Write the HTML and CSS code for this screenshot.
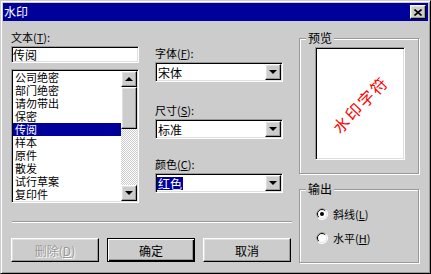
FILE: index.html
```html
<!DOCTYPE html>
<html lang="zh-CN">
<head>
    <meta charset="UTF-8">
    <title>水印</title>
    <link rel="stylesheet" href="styles.css">
</head>
<body>
    <div class="window">
        <div class="titlebar">
            <span class="title">水印</span>
            <button class="close">
                <svg width="8" height="7" viewBox="0 0 8 7">
                    <path d="M0.5 0.5 L7.5 6.5 M7.5 0.5 L0.5 6.5" stroke="#000" stroke-width="1.6" fill="none"/>
                </svg>
            </button>
        </div>
        <div class="dialog-body">
            <div class="main">
                <div class="fields">
                    <div class="col">
                        <label class="lbl">文本(<u>T</u>):</label>
                        <div class="textbox">传阅</div>
                        <div class="listbox">
                            <ul class="items">
                                <li>公司绝密</li>
                                <li>部门绝密</li>
                                <li>请勿带出</li>
                                <li>保密</li>
                                <li class="selected">传阅</li>
                                <li>样本</li>
                                <li>原件</li>
                                <li>散发</li>
                                <li>试行草案</li>
                                <li>复印件</li>
                            </ul>
                            <div class="vscroll">
                                <div class="sbtn up"></div>
                                <div class="thumb"></div>
                                <div class="track"></div>
                                <div class="sbtn down"></div>
                            </div>
                        </div>
                    </div>
                    <div class="col">
                        <label class="lbl lbl-font">字体(<u>F</u>):</label>
                        <div class="combo"><span class="value">宋体</span><span class="drop"></span></div>
                        <label class="lbl lbl-size">尺寸(<u>S</u>):</label>
                        <div class="combo"><span class="value">标准</span><span class="drop"></span></div>
                        <label class="lbl lbl-color">颜色(<u>C</u>):</label>
                        <div class="combo"><span class="value active">红色</span><span class="drop"></span></div>
                    </div>
                </div>
                <div class="separator"></div>
                <div class="buttons">
                    <button class="btn" disabled>删除(<u>D</u>)</button>
                    <button class="btn default">确定</button>
                    <button class="btn">取消</button>
                </div>
            </div>
            <div class="side">
                <fieldset class="group">
                    <legend>预览</legend>
                    <div class="preview"><span class="mark">水印字符</span></div>
                </fieldset>
                <fieldset class="group output">
                    <legend>输出</legend>
                    <div class="radios">
                        <label class="radio">
                            <svg width="12" height="12" viewBox="0 0 12 12">
                                <circle cx="6" cy="6" r="5.5" fill="#fff" stroke="#fff"/>
                                <path d="M9.9 2.1 A5.5 5.5 0 0 0 2.1 9.9" stroke="#999" fill="none"/>
                                <path d="M9.2 2.8 A4.5 4.5 0 0 0 2.8 9.2" stroke="#000" fill="none"/>
                                <path d="M9.2 2.8 A4.5 4.5 0 0 1 2.8 9.2" stroke="#dfdfdf" fill="none"/>
                                <circle cx="6" cy="6" r="2" fill="#000"/>
                            </svg>
                            <span>斜线(<u>L</u>)</span>
                        </label>
                        <label class="radio">
                            <svg width="12" height="12" viewBox="0 0 12 12">
                                <circle cx="6" cy="6" r="5.5" fill="#fff" stroke="#fff"/>
                                <path d="M9.9 2.1 A5.5 5.5 0 0 0 2.1 9.9" stroke="#999" fill="none"/>
                                <path d="M9.2 2.8 A4.5 4.5 0 0 0 2.8 9.2" stroke="#000" fill="none"/>
                                <path d="M9.2 2.8 A4.5 4.5 0 0 1 2.8 9.2" stroke="#dfdfdf" fill="none"/>
                            </svg>
                            <span>水平(<u>H</u>)</span>
                        </label>
                    </div>
                </fieldset>
            </div>
        </div>
    </div>
</body>
</html>
```

FILE: styles.css
```css
* {
    box-sizing: border-box;
    margin: 0;
    padding: 0;
}

body {
    font-family: "Noto Sans CJK SC", sans-serif;
    font-size: 11px;
    background-color: #cccccc;
    color: #000;
}

.window {
    width: 431px;
    height: 274px;
    padding: 2px;
    background-color: #cccccc;
    border: 1px solid;
    border-color: #cccccc #000 #000 #cccccc;
    box-shadow: inset 1px 1px #fff, inset -1px -1px #999;
}

.titlebar {
    height: 18px;
    display: flex;
    align-items: center;
    justify-content: space-between;
    padding: 0 2px 0 1px;
    background-color: #00009a;
    color: #fff;
    font-size: 12px;
}

.title {
    line-height: 14px;
}

.close {
    width: 16px;
    height: 14px;
    display: flex;
    align-items: center;
    justify-content: center;
    background-color: #cccccc;
    border: 1px solid;
    border-color: #fff #000 #000 #fff;
    box-shadow: inset -1px -1px #999, inset 1px 1px #dfdfdf;
}

.dialog-body {
    display: flex;
    gap: 7px;
    padding: 9px 8px 0 8px;
}

.main {
    width: 281px;
}

.fields {
    display: flex;
    gap: 16px;
}

.col {
    width: 128px;
    display: flex;
    flex-direction: column;
}

.lbl {
    line-height: 14px;
    white-space: nowrap;
}

.lbl-font { margin-top: 16px; }
.lbl-size { margin-top: 21px; }
.lbl-color { margin-top: 18px; }

/* sunken fields */
.textbox,
.listbox,
.combo,
.preview {
    border: 1px solid;
    border-color: #999 #fff #fff #999;
    box-shadow: inset 1px 1px #000, inset -1px -1px #dfdfdf;
    background-color: #fff;
}

.textbox {
    height: 17px;
    margin-top: 2px;
    padding: 1px 1px;
    line-height: 13px;
    font-size: 12px;
}

.listbox {
    display: flex;
    height: 134px;
    margin-top: 6px;
    padding: 1px;
}

.items {
    flex: 1;
    list-style: none;
}

.items li {
    height: 13px;
    line-height: 13px;
    padding-left: 2px;
    white-space: nowrap;
}

.items li.selected {
    background-color: #00009a;
    color: #fff;
}

.vscroll {
    width: 16px;
    display: flex;
    flex-direction: column;
}

/* raised parts */
.sbtn,
.thumb,
.drop,
.btn {
    background-color: #cccccc;
    border: 1px solid;
    border-color: #fff #000 #000 #fff;
    box-shadow: inset -1px -1px #999, inset 1px 1px #dfdfdf;
}

.sbtn,
.drop {
    width: 16px;
    height: 16px;
    display: flex;
    align-items: center;
    justify-content: center;
}

.thumb {
    height: 42px;
}

.track {
    flex: 1;
    background-image: conic-gradient(#fff 0 25%, #cccccc 0 50%, #fff 0 75%, #cccccc 0);
    background-size: 2px 2px;
}

.sbtn::after,
.drop::after {
    content: "";
    border: 4px solid transparent;
}

.up::after {
    border-top-width: 0;
    border-bottom-color: #000;
}

.down::after,
.drop::after {
    border-bottom-width: 0;
    border-top-color: #000;
}

.combo {
    height: 20px;
    margin-top: 2px;
    padding: 1px;
    display: flex;
    align-items: center;
    justify-content: space-between;
}

.combo .value {
    line-height: 13px;
    padding: 0 1px;
    font-size: 12px;
}

.combo .value.active {
    background-color: #00009a;
    color: #fff;
}

.separator {
    width: 280px;
    margin: 18px 0 0 1px;
    border-top: 1px solid #999;
    border-bottom: 1px solid #fff;
}

.buttons {
    display: flex;
    gap: 8px;
    margin-top: 15px;
}

.btn {
    width: 88px;
    height: 24px;
    font-family: inherit;
    font-size: 12px;
    color: #000;
}

.btn:disabled {
    color: #999;
    text-shadow: 1px 1px #fff;
}

.btn.default {
    border-color: #000;
    box-shadow: inset 1px 1px #fff, inset -1px -1px #000, inset -2px -2px #999;
}

.side {
    width: 121px;
    margin-top: 2px;
}

.group {
    width: 120px;
    border: 1px solid #999;
    box-shadow: inset 1px 1px #fff, 1px 1px #fff;
}

.group legend {
    margin-left: 6px;
    padding: 0 2px;
    line-height: 12px;
    font-size: 12px;
    background-color: #cccccc;
}

.preview {
    width: 90px;
    height: 113px;
    margin: 3px 0 13px 15px;
    display: flex;
    align-items: center;
    justify-content: center;
    overflow: hidden;
}

.mark {
    color: #ff0000;
    font-size: 16px;
    letter-spacing: 2px;
    white-space: nowrap;
    transform: rotate(-46deg);
}

.output {
    margin-top: 9px;
}

.radios {
    display: flex;
    flex-direction: column;
    gap: 12px;
    padding: 13px 0 18px 16px;
}

.radio {
    display: flex;
    align-items: center;
    gap: 5px;
    height: 12px;
    line-height: 12px;
    white-space: nowrap;
}
```
